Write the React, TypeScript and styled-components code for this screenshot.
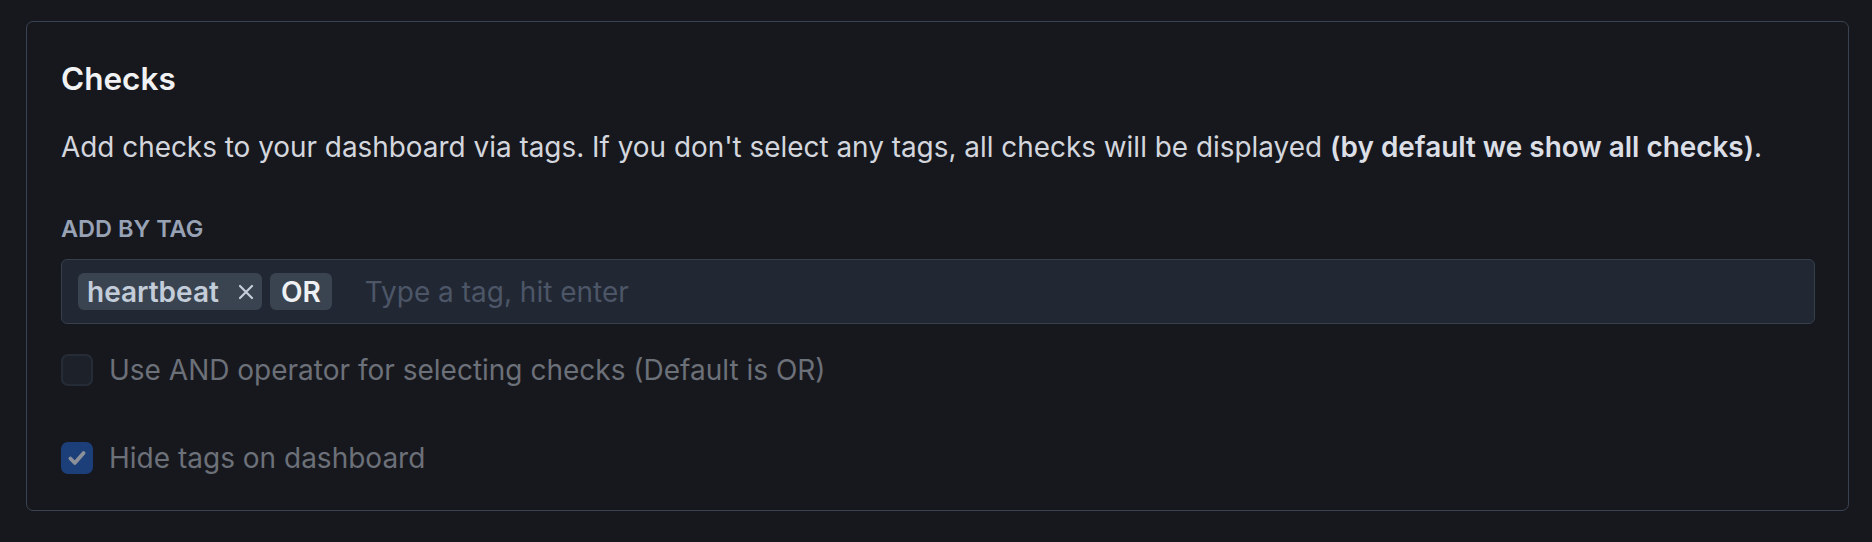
import React from "react"
import styled, { createGlobalStyle } from "styled-components"

const GlobalStyle = createGlobalStyle`
  html, body {
    margin: 0;
    padding: 0;
    background: #17181d;
  }
  body {
    font-family: Inter, "Noto Sans", sans-serif;
    -webkit-font-smoothing: antialiased;
  }
`

const Page = styled.div`
  padding: 21px 23px 31px 26px;
`

const Card = styled.section`
  box-sizing: border-box;
  height: 490px;
  border: 1px solid #3a4352;
  border-radius: 7px;
  padding: 39px 33px 36px 34px;
`

const Title = styled.h2`
  margin: 0;
  font-size: 31.5px;
  line-height: 36px;
  font-weight: 600;
  color: #f1f2f4;
`

const Description = styled.p`
  margin: 32px 0 0;
  font-size: 27.9px;
  line-height: 36px;
  color: #d3d6dd;

  strong {
    font-weight: 600;
    color: #dcdfe6;
  }
`

const FieldLabel = styled.div`
  margin-top: 49px;
  font-size: 23.5px;
  line-height: 30px;
  font-weight: 600;
  color: #98a2b5;
  text-transform: uppercase;
`

const TagInput = styled.div`
  box-sizing: border-box;
  margin-top: 15px;
  width: 1754px;
  height: 65px;
  display: flex;
  align-items: center;
  gap: 8px;
  padding: 0 16px;
  background: #212733;
  border: 1.5px solid #363f4c;
  border-radius: 6px;
`

const Tag = styled.span<{ $strong?: boolean }>`
  display: inline-flex;
  align-items: center;
  height: 37px;
  gap: 19px;
  padding: ${({ $strong }) => ($strong ? "0 11px" : "0 8px 0 9px")};
  background: #3a4451;
  border-radius: 6px;
  font-size: 28px;
  font-weight: 600;
  color: ${({ $strong }) => ($strong ? "#eef0f3" : "#c3ccd9")};
`

const RemoveIcon = styled.svg`
  width: 16px;
  height: 16px;
  margin-top: 1px;
`

const Placeholder = styled.span`
  margin-left: 25px;
  font-size: 28px;
  color: #4c5667;
`

const CheckRow = styled.label<{ $first?: boolean }>`
  display: flex;
  align-items: center;
  gap: 16px;
  height: 34px;
  margin-top: ${({ $first }) => ($first ? "29px" : "54px")};
  font-size: 28px;
  color: #6c7079;
`

const Box = styled.span<{ $checked?: boolean }>`
  box-sizing: border-box;
  width: 32px;
  height: 32px;
  border-radius: 7px;
  display: flex;
  align-items: center;
  justify-content: center;
  background: ${({ $checked }) => ($checked ? "#1c3f7a" : "#1d222a")};
  border: 2px solid ${({ $checked }) => ($checked ? "#1c3f7a" : "#262c36")};
`

export default function App() {
  return (
    <>
      <GlobalStyle />
      <Page>
        <Card>
          <Title>Checks</Title>
          <Description>
            Add checks to your dashboard via tags. If you don't select any tags, all checks will be displayed{" "}
            <strong>(by default we show all checks)</strong>.
          </Description>
          <FieldLabel>Add by tag</FieldLabel>
          <TagInput>
            <Tag>
              heartbeat
              <RemoveIcon viewBox="0 0 16 16" fill="none" stroke="#c5cdd8" strokeWidth={2.2} strokeLinecap="round">
                <path d="M2 2l12 12M14 2L2 14" />
              </RemoveIcon>
            </Tag>
            <Tag $strong>OR</Tag>
            <Placeholder>Type a tag, hit enter</Placeholder>
          </TagInput>
          <CheckRow $first>
            <Box />
            Use AND operator for selecting checks (Default is OR)
          </CheckRow>
          <CheckRow>
            <Box $checked>
              <svg width="22" height="22" viewBox="0 0 20 20" fill="none" stroke="#8c9099" strokeWidth={3.4} strokeLinecap="round" strokeLinejoin="round">
                <path d="M4 10.5l4 4 8-9" />
              </svg>
            </Box>
            Hide tags on dashboard
          </CheckRow>
        </Card>
      </Page>
    </>
  )
}
